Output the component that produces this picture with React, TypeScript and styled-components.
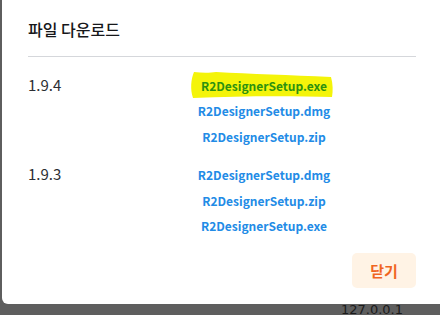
import React from "react";
import styled, { createGlobalStyle } from "styled-components";

const GlobalStyle = createGlobalStyle`
  html, body {
    margin: 0;
    padding: 0;
    width: 440px;
    height: 315px;
    overflow: hidden;
    background: #5e5e5e;
    font-family: "Noto Sans CJK KR", "Noto Sans", sans-serif;
  }
`;

const Page = styled.div`
  position: relative;
  width: 440px;
  height: 315px;
  background: #5e5e5e;
`;

const HostLabel = styled.div`
  position: absolute;
  left: 341px;
  bottom: -2px;
  font-family: "DejaVu Sans", sans-serif;
  font-size: 13px;
  color: #1b1b1b;
`;

const Modal = styled.div`
  position: absolute;
  left: 2px;
  top: -8px;
  width: 446px;
  height: 312px;
  box-sizing: border-box;
  padding: 8px 32px 16px 26px;
  background: #fff;
  border-radius: 6px;
  display: flex;
  flex-direction: column;
`;

const Title = styled.h2`
  margin: 0;
  padding: 19px 0 17px;
  font-size: 16px;
  font-weight: 500;
  line-height: 20px;
  color: #16171a;
  border-bottom: 1px solid #d5d7db;
`;

const List = styled.div`
  display: flex;
  flex-direction: column;
  gap: 12px;
  padding-top: 15px;
`;

const Release = styled.div`
  display: grid;
  grid-template-columns: 84px 1fr;
  align-items: baseline;
`;

const Version = styled.div`
  font-size: 15px;
  line-height: 25.5px;
  color: #2c2e33;
`;

const Files = styled.div`
  display: flex;
  flex-direction: column;
  align-items: center;
`;

const FileLink = styled.a<{ $marked?: boolean }>`
  position: relative;
  isolation: isolate;
  font-size: 12px;
  font-weight: 600;
  line-height: 25.4px;
  color: ${(p) => (p.$marked ? "#2c9110" : "#228be6")};
  text-decoration: none;
  cursor: pointer;
`;

const Marker = styled.svg`
  position: absolute;
  left: -11px;
  top: -2px;
  width: 144px;
  height: 28px;
  z-index: -1;
`;

const Footer = styled.div`
  margin-top: auto;
  display: flex;
  justify-content: flex-end;
`;

const CloseButton = styled.button`
  width: 64px;
  height: 35px;
  border: none;
  border-radius: 5px;
  background: #fff3e5;
  color: #f0651f;
  font-family: inherit;
  font-size: 15px;
  font-weight: 600;
  cursor: pointer;
`;

const releases = [
  { version: "1.9.4", files: ["R2DesignerSetup.exe", "R2DesignerSetup.dmg", "R2DesignerSetup.zip"] },
  { version: "1.9.3", files: ["R2DesignerSetup.dmg", "R2DesignerSetup.zip", "R2DesignerSetup.exe"] },
];

export default function App() {
  return (
    <Page>
      <GlobalStyle />
      <HostLabel>127.0.0.1</HostLabel>
      <Modal>
        <Title>파일 다운로드</Title>
        <List>
          {releases.map((r, ri) => (
            <Release key={r.version}>
              <Version>{r.version}</Version>
              <Files>
                {r.files.map((f, fi) => {
                  const marked = ri === 0 && fi === 0;
                  return (
                    <FileLink key={f} $marked={marked}>
                      {marked && (
                        <Marker viewBox="0 0 144 28">
                          <path
                            d="M4 1 C12 2 20 2 26 1 C60 3 100 4 141 6 C143 13 143 20 142 26 C100 25 50 25 3 27 C0 18 1 8 4 1 Z"
                            fill="#f4f40a"
                          />
                        </Marker>
                      )}
                      {f}
                    </FileLink>
                  );
                })}
              </Files>
            </Release>
          ))}
        </List>
        <Footer>
          <CloseButton>닫기</CloseButton>
        </Footer>
      </Modal>
    </Page>
  );
}
